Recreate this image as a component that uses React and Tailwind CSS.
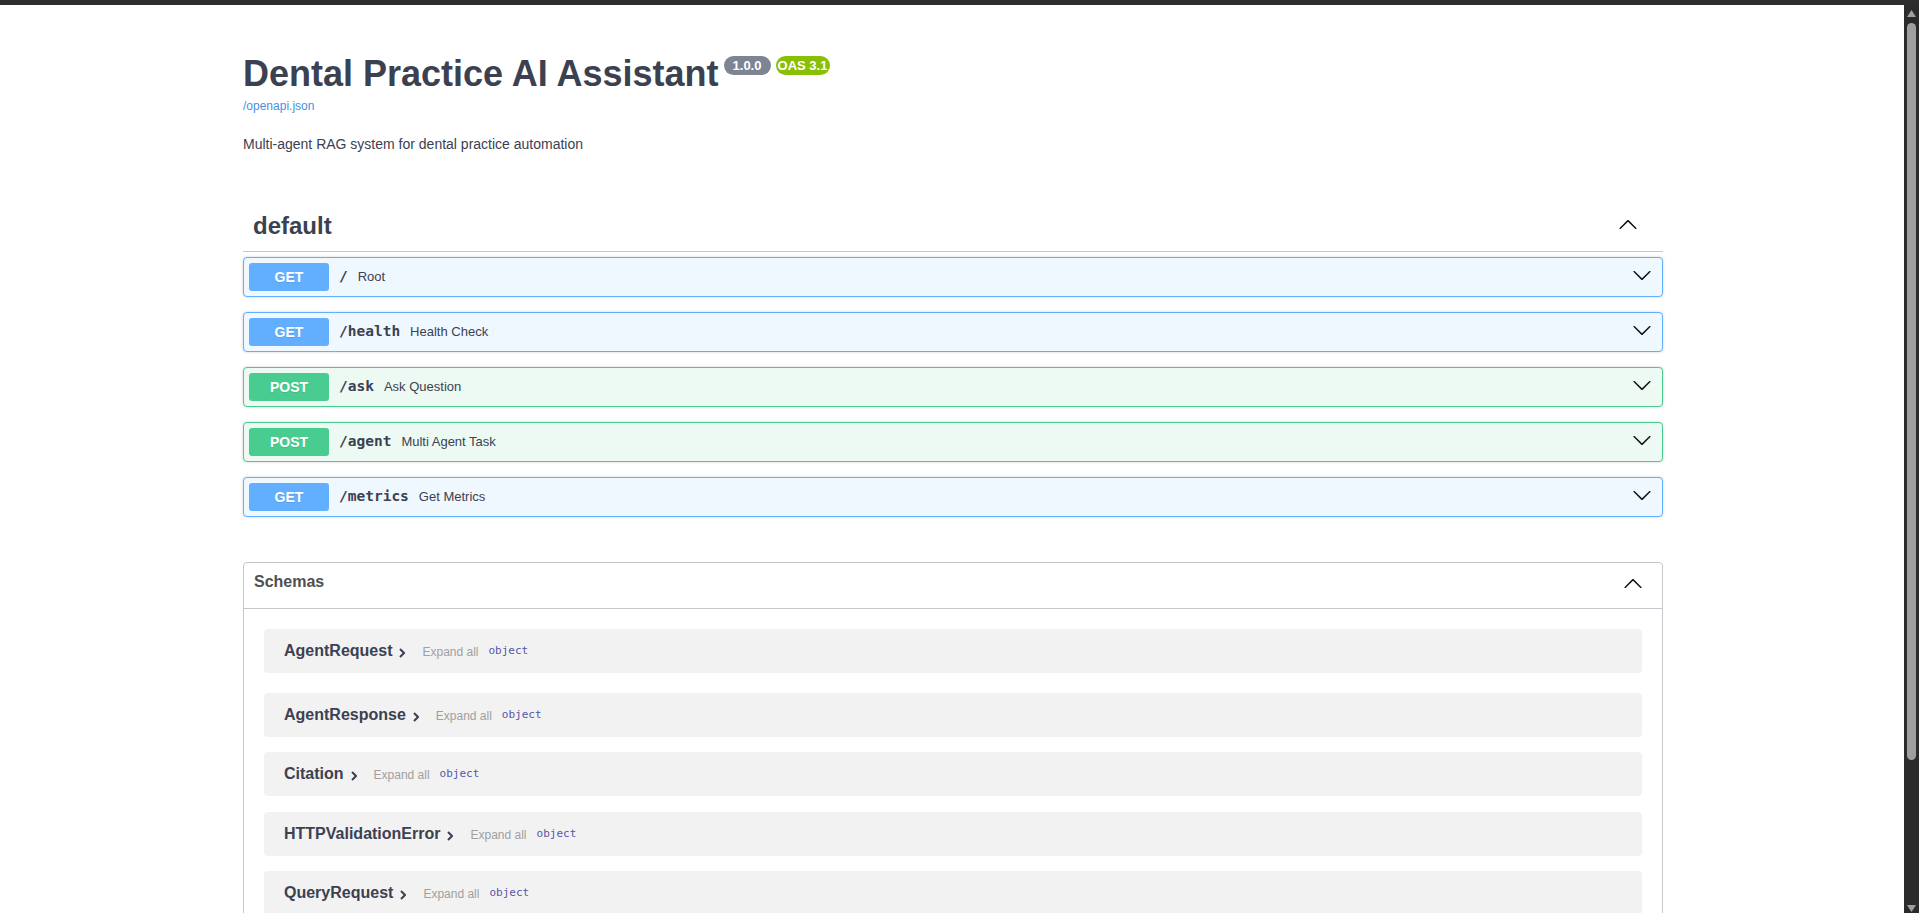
import React from 'react';

const endpoints = [
  { method: 'GET', path: '/', summary: 'Root' },
  { method: 'GET', path: '/health', summary: 'Health Check' },
  { method: 'POST', path: '/ask', summary: 'Ask Question' },
  { method: 'POST', path: '/agent', summary: 'Multi Agent Task' },
  { method: 'GET', path: '/metrics', summary: 'Get Metrics' },
];

const schemas = [
  { name: 'AgentRequest', space: 'mt-[20px]' },
  { name: 'AgentResponse', space: 'mt-[20px]' },
  { name: 'Citation', space: 'mt-[15px]' },
  { name: 'HTTPValidationError', space: 'mt-[16px]' },
  { name: 'QueryRequest', space: 'mt-[15px]' },
];

const methodStyles = {
  GET: { block: 'bg-[#eff7ff] border-[#61affe]', badge: 'bg-[#61affe]' },
  POST: { block: 'bg-[#edfaf3] border-[#49cc90]', badge: 'bg-[#49cc90]' },
};

const ArrowDown = ({ className = '' }) => (
  <svg width="20" height="20" viewBox="0 0 20 20" className={className}>
    <path
      fill="#111"
      d="M17.418 6.109c.272-.268.709-.268.979 0s.271.701 0 .969l-7.908 7.83c-.27.268-.707.268-.979 0l-7.908-7.83c-.27-.268-.27-.701 0-.969.271-.268.709-.268.979 0L10 13.25l7.418-7.141z"
    />
  </svg>
);

const ArrowUp = ({ className = '' }) => (
  <svg width="20" height="20" viewBox="0 0 20 20" className={className}>
    <path
      fill="#111"
      d="M2.582 13.891c-.272.268-.709.268-.979 0s-.271-.701 0-.969l7.908-7.83c.27-.268.707-.268.979 0l7.908 7.83c.27.268.27.701 0 .969-.271.268-.709.268-.979 0L10 6.75l-7.418 7.141z"
    />
  </svg>
);

const Operation = ({ method, path, summary }) => {
  const s = methodStyles[method];
  return (
    <div
      className={`mb-[15px] flex h-[40px] items-center rounded-[4px] border p-[5px] shadow-[0_0_3px_rgba(0,0,0,0.19)] ${s.block}`}
    >
      <span
        className={`flex h-[28px] w-[80px] items-center justify-center rounded-[3px] text-[14px] font-bold text-white [text-shadow:0_1px_0_rgba(0,0,0,0.1)] ${s.badge}`}
      >
        {method}
      </span>
      <span className="px-[10px] font-['DejaVu_Sans_Mono',monospace] text-[14.5px] font-bold text-[#3b4151]">
        {path}
      </span>
      <span className="flex-1 text-[13px] text-[#3b4151]">{summary}</span>
      <ArrowDown className="mb-[5px] mr-[5px]" />
    </div>
  );
};

const SchemaRow = ({ name, space }) => (
  <div className={`mx-[20px] flex h-[44px] items-center rounded-[4px] bg-[#f2f2f2] pl-[20px] ${space}`}>
    <span className="text-[16px] font-bold text-[#3b4151]">{name}</span>
    <svg width="6" height="10" viewBox="0 0 6 10" className="ml-[7px] mt-[3px]">
      <path d="M1 1 L5 5 L1 9" fill="none" stroke="#3b4151" strokeWidth="2" />
    </svg>
    <span className="ml-[17px] mt-[1px] text-[12px] text-[#a0a0a0]">Expand all</span>
    <span className="ml-[10px] mt-[1px] font-['DejaVu_Sans_Mono',monospace] text-[11px] text-[#55a]">
      object
    </span>
  </div>
);

const Scrollbar = () => (
  <div className="flex w-[15px] flex-col items-center bg-[#2b2b2b] pt-[5px]">
    <svg width="9" height="7" viewBox="0 0 9 7">
      <path d="M4.5 0 L9 7 L0 7 Z" fill="#a0a0a0" />
    </svg>
    <div className="mt-[6px] h-[737px] w-[9px] rounded-full bg-[#9f9f9f]" />
    <div className="flex-1" />
    <svg width="9" height="7" viewBox="0 0 9 7" className="mb-[1px]">
      <path d="M0 0 L9 0 L4.5 7 Z" fill="#a0a0a0" />
    </svg>
  </div>
);

export default function App() {
  return (
    <div className="flex h-[913px] flex-col overflow-hidden bg-white font-['Liberation_Sans',Arial,sans-serif] text-[#3b4151]">
      <div className="h-[5px] bg-[#2d2d2d]" />
      <div className="flex min-h-0 flex-1">
        <main className="min-w-0 flex-1 overflow-hidden">
          <div className="mx-auto max-w-[1460px] pl-[21px] pr-[19px]">
            {/* info */}
            <div className="pt-[49px]">
              <div className="flex items-start">
                <h2 className="text-[36px] font-bold leading-[40px] text-[#3b4151]">
                  Dental Practice AI Assistant
                </h2>
                <span className="ml-[5px] mt-[2px] flex h-[19px] w-[47px] items-center justify-center rounded-full bg-[#7d8492] text-[13px] font-bold text-white">
                  1.0.0
                </span>
                <span className="ml-[5px] mt-[2px] flex h-[19px] w-[54px] items-center justify-center rounded-full bg-[#89bf04] text-[13px] font-bold text-white">
                  OAS 3.1
                </span>
              </div>
              <a className="mt-[5px] block text-[12px] leading-[15px] text-[#4990e2]">/openapi.json</a>
              <p className="mt-[20px] text-[14px] leading-[20px] text-[#3b4151]">
                Multi-agent RAG system for dental practice automation
              </p>
            </div>

            {/* default tag */}
            <div className="mt-[50px]">
              <div className="flex items-start border-b border-[#c4c6cb] pl-[10px] pr-[25px]">
                <h3 className="flex-1 pb-[11px] pt-[8px] text-[24px] font-bold leading-[28px] text-[#3b4151]">
                  default
                </h3>
                <ArrowUp className="mt-[11px]" />
              </div>
              <div className="mt-[5px]">
                {endpoints.map((e) => (
                  <Operation key={e.path} {...e} />
                ))}
              </div>
            </div>

            {/* schemas */}
            <section className="mt-[45px] rounded-[4px] border border-[#c4c6cb] pb-[20px]">
              <div className="flex items-start border-b border-[#c4c6cb] pl-[10px] pr-[19px]">
                <h4 className="flex-1 pb-[16px] pt-[9px] text-[16px] font-bold leading-[20px] text-[#505050]">
                  Schemas
                </h4>
                <ArrowUp className="mt-[11px]" />
              </div>
              {schemas.map((s) => (
                <SchemaRow key={s.name} {...s} />
              ))}
            </section>
          </div>
        </main>
        <Scrollbar />
      </div>
    </div>
  );
}
